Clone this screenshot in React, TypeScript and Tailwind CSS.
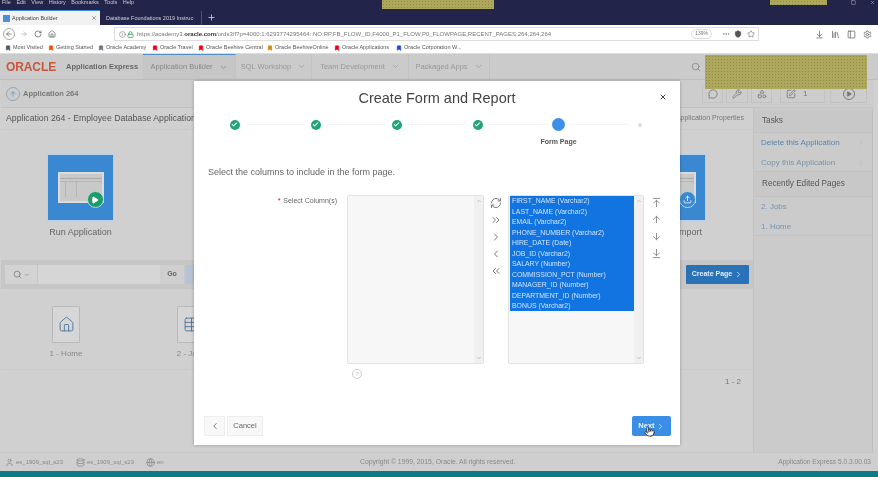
import React from 'react';
import {
  ArrowDown, ArrowDownToLine, ArrowLeft, ArrowRight, ArrowUp, ArrowUpToLine, Bookmark, Check, ChevronDown,
  ChevronLeft, ChevronRight, ChevronsLeft, ChevronsRight, Database, Edit, Globe, Home, Info,
  Library, Lock, MessageCircle, Play, Plus, Pointer, RefreshCw, RotateCw, Search, Settings, Shapes, Shield, Sidebar,
  Square, Star, Table, Upload, User, Wrench, X, MoreHorizontal,
} from 'lucide-react';

const MENU = ['File', 'Edit', 'View', 'History', 'Bookmarks', 'Tools', 'Help'];
const BOOKMARKS = [
  { label: 'Most Visited', color: 'text-gray-600', w: 'w-[40px]' },
  { label: 'Getting Started', color: 'text-orange-600', w: 'w-[47px]' },
  { label: 'Oracle Academy', color: 'text-gray-500', w: 'w-[51px]' },
  { label: 'Oracle Travel', color: 'text-red-600', w: 'w-[43px]' },
  { label: 'Oracle Beehive Central', color: 'text-red-600', w: 'w-[66px]' },
  { label: 'Oracle BeehiveOnline', color: 'text-yellow-600', w: 'w-[64px]' },
  { label: 'Oracle Applications', color: 'text-red-600', w: 'w-[59px]' },
  { label: 'Oracle Corporation W...', color: 'text-blue-700', w: 'w-[68px]' },
];
const COLUMNS = [
  'FIRST_NAME (Varchar2)', 'LAST_NAME (Varchar2)', 'EMAIL (Varchar2)', 'PHONE_NUMBER (Varchar2)', 'HIRE_DATE (Date)',
  'JOB_ID (Varchar2)', 'SALARY (Number)', 'COMMISSION_PCT (Number)', 'MANAGER_ID (Number)', 'DEPARTMENT_ID (Number)',
  'BONUS (Varchar2)',
];
const HATCH = 'absolute bg-[#aea85c] bg-[radial-gradient(#8f8a45_1px,transparent_1px)] bg-[length:3px_3px]';

const Tile = ({ label, upload }: { label: string; upload?: boolean }) => (
  <div className="w-[67px] flex flex-col items-center">
    <div className="w-[67px] h-[67px] bg-[#3a88d2] border border-[#b5d4ec] flex items-center justify-center">
      <div className="relative w-[46px] h-[31px] bg-[#c9c9c9] border-2 border-[#dcdcdc]">
        <div className="h-[5px] border-b border-[#aaa]" />
        <div className="h-[3px] border-b border-[#b5b5b5]" />
        <div className="flex h-[15px] pl-[5px] gap-[10px]">
          <div className="w-px bg-[#b5b5b5]" />
          <div className="w-px bg-[#b5b5b5]" />
        </div>
        <div className={`absolute -right-[2px] -bottom-[7px] w-[17px] h-[17px] rounded-full border border-[#b9d9cb] flex items-center justify-center ${upload ? 'bg-[#3a88d2]' : 'bg-[#1f9a6c]'}`}>
          {upload ? <Upload size={9} className="text-white" /> : <Play size={8} className="text-white fill-white" />}
        </div>
      </div>
    </div>
    <div className="mt-[5px] text-[9px] leading-[12px] text-[#666] whitespace-nowrap">{label}</div>
  </div>
);

const PageIcon = ({ label, table }: { label: string; table?: boolean }) => (
  <div className="w-[60px] flex flex-col items-center">
    <div className="w-[28px] h-[37px] bg-[#d6d6d6] border border-[#b9b9b9] rounded-[1px] flex items-center justify-center">
      {table ? <Table size={17} strokeWidth={1.3} className="text-[#4e7396]" /> : <Home size={17} strokeWidth={1.3} className="text-[#4e7396]" />}
    </div>
    <div className="mt-[5px] text-[8px] leading-[11px] text-[#888] whitespace-nowrap">{label}</div>
  </div>
);

const Step = ({ done, current, label }: { done?: boolean; current?: boolean; label?: string }) => (
  <div className="relative w-[13px] h-[13px] flex items-center justify-center shrink-0">
    {done && (
      <div className="w-[10px] h-[10px] rounded-full bg-[#23a477] flex items-center justify-center">
        <Check size={7} strokeWidth={3.5} className="text-white" />
      </div>
    )}
    {current && <div className="w-[13px] h-[13px] rounded-full bg-[#3d8fe8]" />}
    {!done && !current && <div className="w-[4px] h-[4px] rounded-full bg-[#dedede]" />}
    {label && <div className="absolute top-[19px] text-[7px] leading-[9px] font-bold text-[#555] whitespace-nowrap">{label}</div>}
  </div>
);

const Shuttle = ({ children, w }: { children?: React.ReactNode; w: string }) => (
  <div className={`${w} h-[169px] bg-[#f7f7f7] border border-[#e2e2e2] rounded-[2px] flex`}>
    <div className="flex-1 min-w-0">{children}</div>
    <div className="w-[9px] bg-[#f0f0f0] flex flex-col justify-between items-center py-[2px]">
      <ChevronDown size={6} className="text-[#999] rotate-180" />
      <ChevronDown size={6} className="text-[#999]" />
    </div>
  </div>
);

const HeadTab = ({ label, w, active }: { label: string; w: string; active?: boolean }) => (
  <div className={`${w} h-full flex items-center justify-center gap-[6px] text-[7.5px] border-r border-[#c2c2c2] ${active ? 'bg-[#c6c6c6] border-t border-t-[#4f8fc4] text-[#888]' : 'text-[#999]'}`}>
    <span className="whitespace-nowrap">{label}</span> <ChevronDown size={9} className="shrink-0" />
  </div>
);

export default function App() {
  return (
    <div className="relative w-[878px] h-[477px] overflow-hidden flex flex-col bg-[#d0d0d0] blur-[0.4px] font-['Liberation_Sans',sans-serif]">
      {/* Browser chrome */}
      <div className="h-[10px] bg-[#23244a] flex items-center gap-[5.5px] pl-[2px] pb-[5px] text-[5.5px] text-[#c9c9d6]">
        {MENU.map(m => <span key={m}>{m}</span>)}
        <div className="ml-auto flex gap-[14px] pr-[3px]">
          <Square size={5} className="text-[#ccc]" />
          <X size={5} className="text-[#ccc]" />
        </div>
      </div>
      <div className="h-[15px] bg-[#23244a] flex items-end text-[5.5px]">
        <div className="w-[100px] h-[15px] bg-[#f2f2f2] border-t border-[#3b8ad6] flex items-center gap-[2px] px-[3px] text-[#444]">
          <div className="w-[7px] h-[7px] bg-[#4a90d9]" />
          <span className="flex-1 whitespace-nowrap">Application Builder</span>
          <X size={6} />
        </div>
        <div className="w-[102px] h-[14px] flex items-center px-[6px] text-[#cfcfdd] border-r border-[#555]">
          <span className="flex-1 whitespace-nowrap">Database Foundations 2019 Instruc</span>
          <X size={6} />
        </div>
        <Plus size={9} className="ml-[5px] mb-[3px] text-[#ddd]" />
      </div>
      <div className="h-[16px] bg-white flex items-center pl-[3px] pt-[2px] text-[#555]">
        <div className="w-[12px] h-[12px] rounded-full border border-[#aaa] flex items-center justify-center">
          <ArrowLeft size={8} />
        </div>
        <ArrowRight size={8} className="ml-[5px] text-[#aaa]" />
        <RotateCw size={8} className="ml-[6px]" />
        <Home size={8} className="ml-[6px]" />
      </div>
      <div className="h-[13px] bg-white flex items-center gap-[3px] pl-[5px] pt-[1px] text-[5.5px] text-[#555] border-b border-[#ddd]">
        {BOOKMARKS.map(b => (
          <div key={b.label} className={`${b.w} flex items-center gap-[2px] whitespace-nowrap`}>
            <Bookmark size={6} className={`${b.color} shrink-0 fill-current`} />
            <span>{b.label}</span>
          </div>
        ))}
      </div>

      {/* APEX header */}
      <div className="h-[26px] bg-[#cbcbcb] flex items-center border-b border-[#bdbdbd] pl-[6px]">
        <span className="w-[60px] text-[#c9573f] text-[12px] font-bold tracking-[-0.1px]">ORACLE</span>
        <span className="w-[77px] text-[7.5px] text-[#666] font-bold whitespace-nowrap">Application Express</span>
        <HeadTab active label="Application Builder" w="w-[93px]" />
        <HeadTab label="SQL Workshop" w="w-[76px]" />
        <HeadTab label="Team Development" w="w-[97px]" />
        <HeadTab label="Packaged Apps" w="w-[81px]" />
        <Search size={10} className="ml-auto mr-[177px] text-[#888]" />
      </div>

      {/* Page body */}
      <div className="flex-1 min-h-0 flex flex-col pl-[1px] pr-[5px]">
        <div className="h-[28px] bg-[#cdcdcd] border-b border-[#c2c2c2] flex items-center pl-[5px] pr-[6px]">
          <div className="w-[14px] h-[14px] rounded-full border border-[#8ba8c0] flex items-center justify-center">
            <ArrowUp size={8} className="text-[#6d8fae]" />
          </div>
          <span className="ml-[3px] text-[7.5px] font-bold text-[#777]">Application 264</span>
          <div className="ml-auto flex items-center gap-[3px] text-[#777]">
            <div className="w-[21px] h-[18px] border border-[#c2c2c2] flex items-center justify-center"><MessageCircle size={10} /></div>
            <div className="w-[22px] h-[18px] border border-[#c2c2c2] flex items-center justify-center"><Wrench size={10} /></div>
            <div className="w-[21px] h-[18px] border border-[#c2c2c2] flex items-center justify-center"><Shapes size={10} /></div>
            <div className="ml-[5px] w-[45px] h-[18px] border border-[#c2c2c2] flex items-center pl-[5px] gap-[7px]">
              <Edit size={10} /> <span className="text-[8px]">1</span>
            </div>
            <div className="ml-[2px] w-[37px] h-[18px] border border-[#c2c2c2] flex items-center justify-center">
              <div className="w-[12px] h-[12px] rounded-full border border-[#777] flex items-center justify-center">
                <Play size={6} className="fill-current" />
              </div>
            </div>
          </div>
        </div>
        <div className="flex-1 min-h-0 flex">
          <div className="w-[753px] flex flex-col border-r border-[#c2c2c2]">
            <div className="h-[22px] flex items-center justify-between pl-[5px] pr-[9px] border-b border-[#c9c9c9]">
              <span className="text-[8.7px] text-[#555] whitespace-nowrap">Application 264 - Employee Database Application</span>
              <span className="text-[7px] text-[#777] whitespace-nowrap">Application Properties</span>
            </div>
            <div className="h-[130px] flex justify-between pt-[24px] pl-[46px] pr-[47px]">
              <Tile label="Run Application" />
              <Tile label="Export / Import" upload />
            </div>
            <div className="h-[29px] bg-[#c6c6c6] flex items-center pl-[4px] pr-[4px]">
              <div className="w-[32px] h-[19px] bg-[#d3d3d3] flex items-center justify-center gap-[2px] text-[#777]">
                <Search size={9} /> <ChevronDown size={6} />
              </div>
              <div className="ml-[1px] w-[122px] h-[19px] bg-[#d6d6d6]" />
              <div className="w-[24px] h-[19px] bg-[#cfcfcf] text-[7px] font-bold text-[#666] flex items-center justify-center">Go</div>
              <div className="ml-[2px] w-[8px] h-[19px] bg-[#b5c4d4]" />
              <div className="ml-auto w-[63px] h-[19px] bg-[#2a72b8] rounded-[1px] text-[7px] font-bold text-[#e4eef8] flex items-center justify-center gap-[2px]">
                Create Page <ChevronRight size={9} />
              </div>
            </div>
            <div className="h-[81px] flex items-start pt-[17px] pl-[35px] gap-[65px] border-b border-[#c9c9c9]">
              <PageIcon label="1 - Home" />
              <PageIcon label="2 - Jobs" table />
            </div>
            <div className="flex justify-end pt-[6px] pr-[12px] text-[8px] leading-[11px] text-[#777]">1 - 2</div>
          </div>
          <div className="w-[119px] flex flex-col bg-[#cbcbcb] border-r border-[#bdbdbd] pt-[2px]">
            <div className="h-[23px] bg-[#c8c8c8] border-b border-[#c2c2c2] flex items-center px-[8px] text-[8.2px] text-[#555]">Tasks</div>
            <div className="h-[39px] border-b border-[#c2c2c2] text-[8px] text-[#5a82ad]">
              <div className="h-[20px] flex items-center justify-between px-[7px] whitespace-nowrap">Delete this Application <ChevronRight size={8} className="text-[#bbb]" /></div>
              <div className="h-[19px] flex items-center justify-between px-[7px] text-[#7b93ad] whitespace-nowrap">Copy this Application <ChevronRight size={8} className="text-[#bbb]" /></div>
            </div>
            <div className="h-[25px] bg-[#c8c8c8] border-b border-[#c2c2c2] flex items-center px-[8px] text-[8.2px] text-[#555] whitespace-nowrap">Recently Edited Pages</div>
            <div className="h-[39px] border-b border-[#c2c2c2] text-[8px] text-[#7b93ad]">
              <div className="h-[20px] flex items-center px-[7px]">2. Jobs</div>
              <div className="h-[19px] flex items-center px-[7px]">1. Home</div>
            </div>
          </div>
        </div>
      </div>

      {/* Footer */}
      <div className="h-[19px] bg-[#cfcfcf] border-t border-[#c6c6c6] flex items-center pl-[5px] pr-[7px] text-[#888]">
        <User size={9} className="shrink-0" />
        <span className="ml-[2px] w-[48px] text-[6px] whitespace-nowrap">es_1909_sql_s23</span>
        <Database size={9} className="ml-[12px] shrink-0" />
        <span className="ml-[2px] w-[48px] text-[6px] whitespace-nowrap">es_1909_sql_s23</span>
        <Globe size={9} className="ml-[11px] shrink-0" />
        <span className="ml-[2px] w-[7px] text-[6px]">en</span>
        <span className="ml-[196px] text-[6.8px] whitespace-nowrap">Copyright © 1999, 2015, Oracle. All rights reserved.</span>
        <span className="ml-auto text-[6.6px] whitespace-nowrap">Application Express 5.0.3.00.03</span>
      </div>
      <div className="h-[6px] bg-[#0f7a86]" />

      {/* Address bar sits over the chrome row */}
      <div className="absolute left-[114px] top-[27px] w-[645px] h-[14px] bg-white border border-[#ddd] flex items-center pl-[4px] pr-[3px] text-[6px] text-[#777]">
        <Info size={7} className="shrink-0" />
        <Lock size={7} className="ml-[1px] text-green-700 shrink-0" />
        <span className="ml-[3px] whitespace-nowrap">https://academy3.<b className="text-[#333]">oracle.com</b>/ords3/f?p=4000:1:6293774295464::NO:RP,FB_FLOW_ID,F4000_P1_FLOW,P0_FLOWPAGE,RECENT_PAGES:264,264,264</span>
        <span className="ml-auto border border-[#ddd] rounded-full px-[3px] text-[5px]">139%</span>
        <MoreHorizontal size={8} className="ml-[10px]" />
        <Shield size={8} className="ml-[4px] text-[#555] fill-current" />
        <Star size={8} className="ml-[5px]" />
      </div>
      <div className="absolute left-[815px] top-[30px] flex gap-[7px] text-[#666]">
        <ArrowDownToLine size={9} />
        <Library size={9} />
        <Sidebar size={9} />
        <Settings size={9} />
      </div>

      {/* Masked regions */}
      <div className={`${HATCH} left-[382px] top-0 w-[112px] h-[9px]`} />
      <div className={`${HATCH} left-[770px] top-0 w-[57px] h-[5px]`} />
      <div className={`${HATCH} left-[705px] top-[55px] w-[162px] h-[34px]`} />

      {/* Dialog */}
      <div className="absolute left-[194px] top-[81px] w-[486px] h-[364px] bg-white shadow-[0_0_3px_rgba(0,0,0,0.3)] flex flex-col">
        <div className="relative h-[35px] flex items-center justify-center text-[14.5px] text-[#444]">
          Create Form and Report
          <X size={8} strokeWidth={3} className="absolute right-[13px] top-[12px] text-[#444]" />
        </div>
        <div className="flex items-center pl-[34px] pr-[34px] mt-[2px]">
          {[1, 2, 3, 4].map(i => (
            <React.Fragment key={i}>
              <Step done />
              <div className="flex-1 h-px mx-[5px] bg-[#f3f3f3]" />
            </React.Fragment>
          ))}
          <Step current label="Form Page" />
          <div className="flex-1 h-px mx-[5px] bg-[#f3f3f3]" />
          <Step />
        </div>
        <div className="mt-[35px] pl-[14px] text-[9px] leading-[12px] text-[#666]">Select the columns to include in the form page.</div>
        <div className="mt-[17px] flex items-start">
          <div className="w-[144px] pr-[1px] pt-[1px] text-right text-[7px] leading-[10px] text-[#666]">
            <span className="text-red-600 mr-[1px]">*</span> Select Column(s)
          </div>
          <div className="ml-[9px]"><Shuttle w="w-[137px]" /></div>
          <div className="w-[24px] flex flex-col items-center gap-[5px] pt-[2px] text-[#777]">
            <RefreshCw size={12} />
            <ChevronsRight size={12} />
            <ChevronRight size={12} />
            <ChevronLeft size={12} />
            <ChevronsLeft size={12} />
          </div>
          <Shuttle w="w-[136px]">
            <div className="h-[115px] bg-[#1274e0] text-[6.9px] leading-[10.5px] text-[#cfe3fa] overflow-hidden pl-[2px] ml-[1px]">
              {COLUMNS.map(c => <div key={c} className="whitespace-nowrap">{c}</div>)}
            </div>
          </Shuttle>
          <div className="w-[24px] flex flex-col items-center gap-[6px] pt-[2px] text-[#888]">
            <ArrowUpToLine size={11} />
            <ArrowUp size={11} />
            <ArrowDown size={11} />
            <ArrowDownToLine size={11} />
          </div>
        </div>
        <div className="mt-[5px] ml-[158px] w-[10px] h-[10px] rounded-full border border-[#ccc] text-[6px] leading-[8px] text-[#bbb] text-center">?</div>
        <div className="mt-auto mb-[9px] flex items-center pl-[10px] pr-[9px]">
          <div className="w-[21px] h-[20px] bg-[#f8f8f8] border border-[#eee] flex items-center justify-center text-[#666]">
            <ChevronLeft size={10} />
          </div>
          <div className="ml-[2px] w-[36px] h-[20px] bg-[#f8f8f8] border border-[#eee] flex items-center justify-center text-[7.5px] text-[#666]">Cancel</div>
          <div className="relative ml-auto w-[39px] h-[20px] bg-[#3a8ee6] rounded-[2px] flex items-center justify-center gap-[1px] text-[7.5px] font-bold text-[#eaf3fd]">
            Next <ChevronRight size={9} />
            <Pointer size={11} className="absolute left-[12px] top-[10px] text-[#333] fill-white" />
          </div>
        </div>
      </div>
    </div>
  );
}
